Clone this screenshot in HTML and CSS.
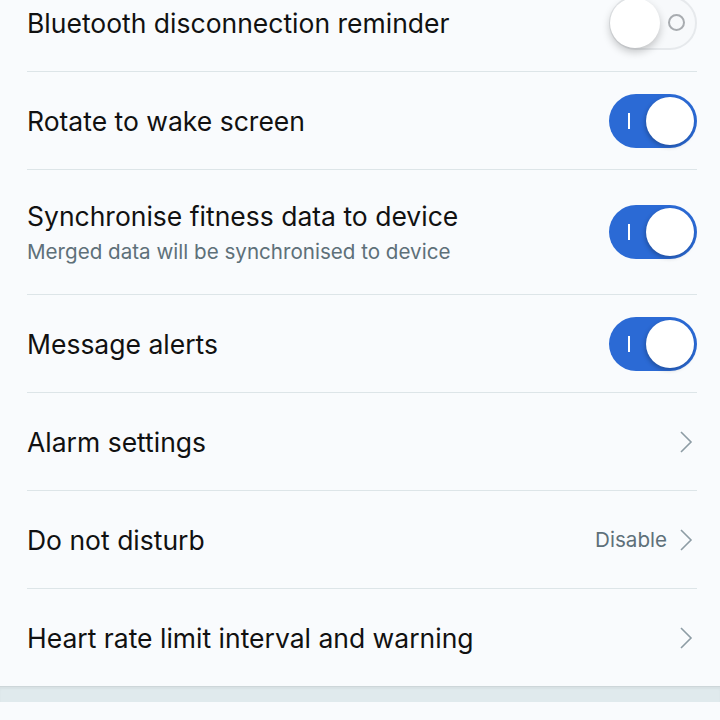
FILE: index.html
```html
<!DOCTYPE html>
<html>
<head>
<meta charset="utf-8">
<link rel="stylesheet" href="styles.css">
</head>
<body>
<div class="list">
  <div class="row">
    <div class="texts"><div class="title">Bluetooth disconnection reminder</div></div>
    <div class="toggle off"><span class="ring"></span><span class="knob"></span></div>
  </div>
  <div class="row">
    <div class="texts"><div class="title">Rotate to wake screen</div></div>
    <div class="toggle on"><span class="bar"></span><span class="knob"></span></div>
  </div>
  <div class="row tall">
    <div class="texts">
      <div class="title">Synchronise fitness data to device</div>
      <div class="sub">Merged data will be synchronised to device</div>
    </div>
    <div class="toggle on"><span class="bar"></span><span class="knob"></span></div>
  </div>
  <div class="row">
    <div class="texts"><div class="title">Message alerts</div></div>
    <div class="toggle on"><span class="bar"></span><span class="knob"></span></div>
  </div>
  <div class="row">
    <div class="texts"><div class="title">Alarm settings</div></div>
    <div class="right">
      <svg class="chev" width="16" height="24" viewBox="0 0 16 24"><path d="M2 2 L12 12 L2 22" fill="none" stroke="#8d9ca5" stroke-width="1.6"/></svg>
    </div>
  </div>
  <div class="row">
    <div class="texts"><div class="title">Do not disturb</div></div>
    <div class="right">
      <span class="value">Disable</span>
      <svg class="chev" width="16" height="24" viewBox="0 0 16 24"><path d="M2 2 L12 12 L2 22" fill="none" stroke="#8d9ca5" stroke-width="1.6"/></svg>
    </div>
  </div>
  <div class="row last">
    <div class="texts"><div class="title">Heart rate limit interval and warning</div></div>
    <div class="right">
      <svg class="chev" width="16" height="24" viewBox="0 0 16 24"><path d="M2 2 L12 12 L2 22" fill="none" stroke="#8d9ca5" stroke-width="1.6"/></svg>
    </div>
  </div>
</div>
<div class="band"></div>
</body>
</html>
```
FILE: styles.css
```css
html, body {
  margin: 0;
  padding: 0;
  background: #f9fbfd;
  font-family: Inter, "Noto Sans", sans-serif;
  overflow: hidden;
}
.list {
  margin-top: -26px;
}
.row {
  display: flex;
  align-items: center;
  justify-content: space-between;
  height: 97px;
  margin: 0 23px 0 27px;
  border-bottom: 1px solid #dde5e8;
}
.row.tall {
  height: 124px;
}
.row.last {
  border-bottom: none;
  height: 97px;
}
.title {
  font-size: 26.5px;
  color: #111;
}
.sub {
  font-size: 20.6px;
  color: #5e7079;
  margin-top: 7px;
}
.toggle {
  width: 88px;
  height: 54px;
  border-radius: 27px;
  display: flex;
  align-items: center;
  box-sizing: border-box;
}
.toggle.on {
  background: #2b6ad5;
  justify-content: space-between;
  padding: 0 3px 0 19px;
}
.toggle.on .bar {
  width: 2px;
  height: 16px;
  background: #fff;
}
.toggle.on .knob {
  width: 48px;
  height: 48px;
  border-radius: 50%;
  background: #fff;
  box-shadow: -1px 2px 4px rgba(0,0,0,0.25);
}
.toggle.off {
  background: #f7f9fb;
  border: 2px solid #e6e9ec;
  flex-direction: row-reverse;
  justify-content: space-between;
  padding: 0 10px 0 0;
}
.toggle.off .ring {
  width: 13px;
  height: 13px;
  border: 2px solid #a8acb0;
  border-radius: 50%;
}
.toggle.off .knob {
  width: 50px;
  height: 50px;
  border-radius: 50%;
  background: #fff;
  margin-left: -1px;
  box-shadow: 0 4px 8px rgba(0,0,0,0.22);
}
.right {
  display: flex;
  align-items: center;
  gap: 12px;
}
.value {
  font-size: 20.6px;
  color: #5e7079;
}
.chev {
  display: block;
  margin-right: 2px;
}
.band {
  height: 15px;
  background: #e0eaed;
  border-top: 1px solid #cdd6d9;
  box-shadow: inset 0 2px 2px rgba(0,0,0,0.04);
}
```
